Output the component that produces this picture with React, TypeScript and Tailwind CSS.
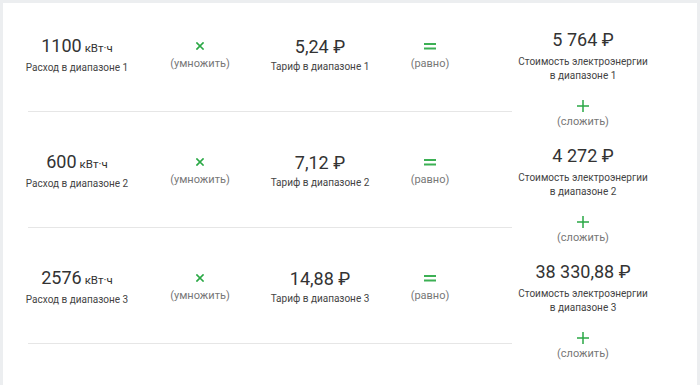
import React from 'react';

type Row = {
  usage: string;
  tariff: string;
  cost: string;
  n: number;
};

const ROWS: Row[] = [
  { usage: '1100', tariff: '5,24 ₽', cost: '5 764 ₽', n: 1 },
  { usage: '600', tariff: '7,12 ₽', cost: '4 272 ₽', n: 2 },
  { usage: '2576', tariff: '14,88 ₽', cost: '38 330,88 ₽', n: 3 },
];

const Times = () => (
  <svg width="8" height="8" viewBox="0 0 8 8" className="block">
    <path d="M1 1 L7 7 M7 1 L1 7" stroke="#2aa845" strokeWidth="1.7" strokeLinecap="square" />
  </svg>
);

const Equals = () => (
  <svg width="12" height="7" viewBox="0 0 12 7" className="block">
    <rect x="0" y="0" width="12" height="2" fill="#3cb054" />
    <rect x="0" y="4.5" width="12" height="2" fill="#3cb054" />
  </svg>
);

const Plus = () => (
  <svg width="12" height="12" viewBox="0 0 12 12" className="block">
    <path d="M6 0 V12 M0 6 H12" stroke="#2aa845" strokeWidth="1.5" />
  </svg>
);

const App: React.FC = () => {
  return (
    <div className="h-[385px] bg-[#eceef0] pt-[3px] px-[3px] font-['Roboto',sans-serif] overflow-hidden">
      <div className="h-[382px] bg-white overflow-hidden">
        <div className="-mt-[7px]">
          {ROWS.map((row) => (
            <div key={row.n} className="flex h-[116px]">
              {/* formula */}
              <div className="ml-[25px] w-[484px] flex items-center pt-[3px] border-b border-[#e6e6e6]">
                <div className="w-[98px] flex flex-col items-center">
                  <div className="flex items-baseline gap-[3px] leading-[22px] text-[#333]">
                    <span className="text-[18px]">{row.usage}</span>
                    <span className="text-[11.5px]">кВт·ч</span>
                  </div>
                  <div className="mt-[2px] whitespace-nowrap text-[10px] leading-[14px] text-[#444]">
                    Расход в диапазоне {row.n}
                  </div>
                </div>

                <div className="w-[148px] flex flex-col items-center">
                  <div className="h-[16px] flex items-center"><Times /></div>
                  <div className="mt-[2px] text-[11px] leading-[16px] text-[#777]">(умножить)</div>
                </div>

                <div className="w-[92px] flex flex-col items-center">
                  <div className="text-[18px] leading-[22px] text-[#333] whitespace-nowrap">{row.tariff}</div>
                  <div className="mt-[2px] whitespace-nowrap text-[10px] leading-[14px] text-[#444]">
                    Тариф в диапазоне {row.n}
                  </div>
                </div>

                <div className="w-[128px] flex flex-col items-center">
                  <div className="h-[16px] flex items-center"><Equals /></div>
                  <div className="mt-[2px] text-[11px] leading-[16px] text-[#777]">(равно)</div>
                </div>
              </div>

              {/* result */}
              <div className="w-[142px] flex flex-col items-center pt-[33px]">
                <div className="text-[18px] leading-[22px] text-[#333] whitespace-nowrap">{row.cost}</div>
                <div className="mt-[4px] text-center text-[10px] leading-[14px] text-[#444] whitespace-nowrap">
                  Стоимость электроэнергии
                  <br />
                  в диапазоне {row.n}
                </div>
                <div className="mt-[17px] h-[20px] flex items-center"><Plus /></div>
                <div className="mt-[3px] text-[11px] leading-[14px] text-[#777]">(сложить)</div>
              </div>
            </div>
          ))}
        </div>
      </div>
    </div>
  );
};

export default App;
